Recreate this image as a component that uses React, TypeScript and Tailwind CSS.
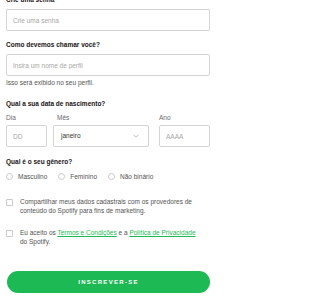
import React from 'react';

const labelCls = "block text-[6.5px] leading-[9px] font-bold text-[#191414]";
const inputCls =
  "block w-full h-[22px] rounded-[2px] border border-[#d4d4d4] bg-white px-[6px] text-[6.5px] text-[#191414] placeholder:text-[#a7a7a7] outline-none";

function Radio({ label }: { label: string }) {
  return (
    <label className="flex items-center gap-[5px]">
      <span className="w-[7px] h-[7px] rounded-full border border-[#c9c9c9] bg-white" />
      <span className="text-[6.5px] leading-[9px] text-[#535353]">{label}</span>
    </label>
  );
}

function Checkbox({ children }: { children: React.ReactNode }) {
  return (
    <label className="flex items-start gap-[7px]">
      <span className="mt-[1px] w-[7px] h-[7px] rounded-[1px] border border-[#c9c9c9] bg-white shrink-0" />
      <span className="w-[180px] text-[6.5px] leading-[8.5px] text-[#535353]">{children}</span>
    </label>
  );
}

export default function App() {
  return (
    <div className="w-[224px] h-[300px] overflow-hidden bg-white font-['Liberation_Sans',Arial,sans-serif]">
      <form className="ml-[6px] w-[204px] -mt-[5px]">
        {/* Senha */}
        <label className={labelCls}>Crie uma senha</label>
        <input type="password" placeholder="Crie uma senha" className={`mt-[5px] ${inputCls}`} />

        {/* Nome */}
        <label className={`mt-[9px] ${labelCls}`}>Como devemos chamar você?</label>
        <input type="text" placeholder="Insira um nome de perfil" className={`mt-[5px] ${inputCls}`} />
        <p className="mt-[2px] text-[6.5px] leading-[9px] text-[#535353]">Isso será exibido no seu perfil.</p>

        {/* Nascimento */}
        <label className={`mt-[12px] ${labelCls}`}>Qual a sua data de nascimento?</label>
        <div className="mt-[5px] flex">
          <div className="w-[41px]">
            <span className="block text-[6.5px] leading-[9px] text-[#6a6a6a]">Dia</span>
            <input type="text" placeholder="DD" className={`mt-[3px] ${inputCls}`} />
          </div>
          <div className="ml-[6px] w-[96px]">
            <span className="block pl-[4px] text-[6.5px] leading-[9px] text-[#6a6a6a]">Mês</span>
            <div className="mt-[3px] flex items-center justify-between h-[22px] rounded-[2px] border border-[#d4d4d4] pl-[7px] pr-[9px]">
              <span className="text-[6.5px] text-[#333333]">janeiro</span>
              <svg width="6" height="4" viewBox="0 0 6 4" fill="none">
                <polyline points="0.5,0.7 3,3.2 5.5,0.7" stroke="#b0b0b0" strokeWidth="0.8" />
              </svg>
            </div>
          </div>
          <div className="ml-[10px] w-[51px]">
            <span className="block text-[6.5px] leading-[9px] text-[#6a6a6a]">Ano</span>
            <input type="text" placeholder="AAAA" className={`mt-[3px] ${inputCls}`} />
          </div>
        </div>

        {/* Gênero */}
        <label className={`mt-[10px] ${labelCls}`}>Qual é o seu gênero?</label>
        <div className="mt-[6px] flex items-center gap-[11px]">
          <Radio label="Masculino" />
          <Radio label="Feminino" />
          <Radio label="Não binário" />
        </div>

        {/* Marketing */}
        <div className="mt-[17px]">
          <Checkbox>
            Compartilhar meus dados cadastrais com os provedores de conteúdo do Spotify para fins de marketing.
          </Checkbox>
        </div>

        {/* Termos */}
        <div className="mt-[14px]">
          <Checkbox>
            Eu aceito os <a className="text-[#1db954] underline">Termos e Condições</a> e a{' '}
            <a className="text-[#1db954] underline">Política de Privacidade</a> do Spotify.
          </Checkbox>
        </div>

        <button
          type="button"
          className="mt-[25px] ml-[1px] w-[203px] h-[22px] rounded-full bg-[#1db954] text-white text-[6px] font-bold tracking-[1.3px]"
        >
          INSCREVER-SE
        </button>
      </form>
    </div>
  );
}
